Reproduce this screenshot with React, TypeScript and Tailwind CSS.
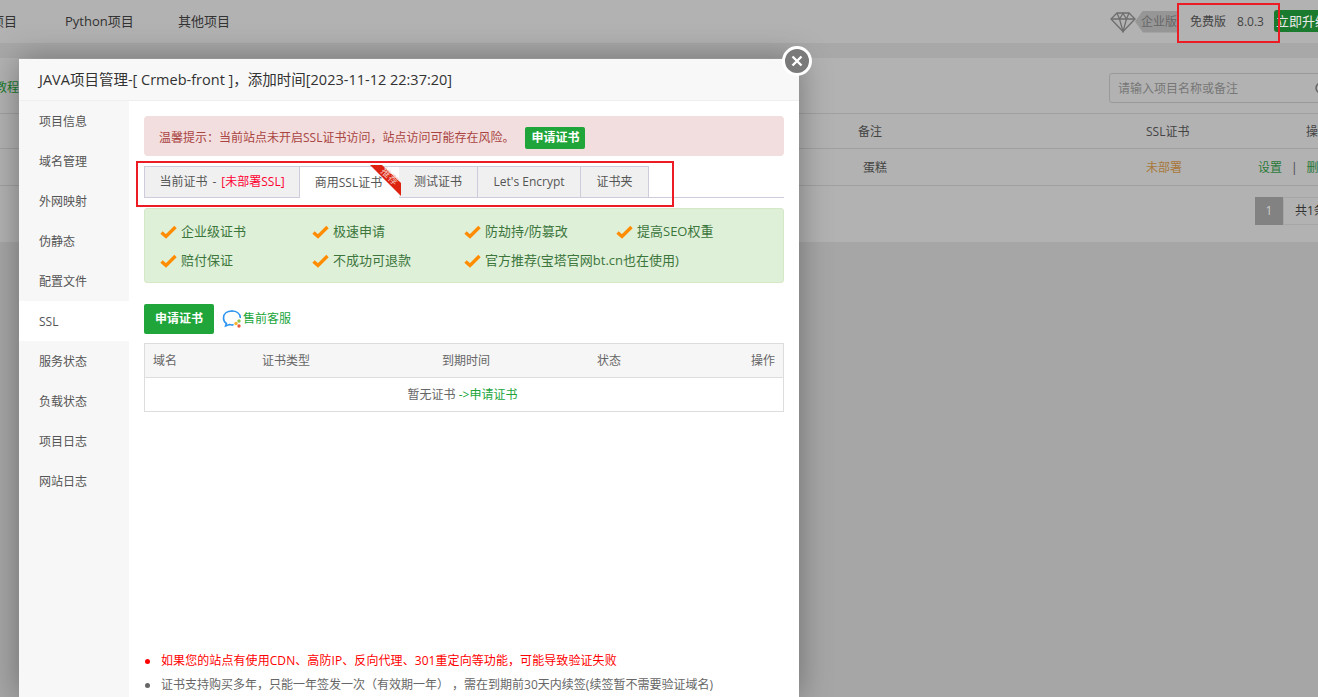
const FONT = "font-['Open_Sans','Noto_Sans_CJK_SC',sans-serif]";

const sideItems = ["项目信息", "域名管理", "外网映射", "伪静态", "配置文件", "SSL", "服务状态", "负载状态", "项目日志", "网站日志"];
const tabs = [
  { label: "测试证书", w: "w-[79px]" },
  { label: "Let's Encrypt", w: "w-[103px]" },
  { label: "证书夹", w: "w-[68px]" },
];
const featureRows = [
  ["企业级证书", "极速申请", "防劫持/防篡改", "提高SEO权重"],
  ["赔付保证", "不成功可退款", "官方推荐(宝塔官网bt.cn也在使用)"],
];

const Check = () => (
  <svg width="17" height="14" viewBox="0 0 17 14" className="mr-[4px] shrink-0">
    <path d="M1.5 7.5 L6 11.5 L15.5 2" fill="none" stroke="#ff8c00" strokeWidth="3.4" />
  </svg>
);

const Diamond = () => (
  <svg width="26" height="22" viewBox="0 0 26 22" fill="none" stroke="#6e6e6e" strokeWidth="1.3" className="shrink-0">
    <path d="M7 2 H19 L25 8 L13 20.5 L1 8 Z" />
    <path d="M1 8 H25 M7 2 L9.5 8 L13 20.5 L16.5 8 L19 2 M9.5 8 L13 2.5 L16.5 8" />
  </svg>
);

const ChatIcon = () => (
  <svg width="21" height="20" viewBox="0 0 21 20" fill="none">
    <path d="M10 2 C5 2 1.5 4.8 1.5 9 C1.5 11.4 2.7 13.3 4.4 14.5 L3.6 17 L7.4 15.6 C8.4 15.9 9.6 16 11 15.9" stroke="#2b93f0" strokeWidth="1.6" strokeLinecap="round" />
    <path d="M10 2 C14.6 2 18 4.6 18.3 8.4" stroke="#2b93f0" strokeWidth="1.6" strokeLinecap="round" />
    <circle cx="17" cy="12" r="1.7" fill="#8bc34a" />
    <circle cx="14" cy="14.5" r="1.7" fill="#f5b32f" />
    <circle cx="17" cy="17" r="1.7" fill="#ef5a3c" />
  </svg>
);

const Backdrop = () => (
  <div className="w-[1318px] h-[697px] bg-[#a6a6a6] overflow-hidden">
    <div className="h-[43px] bg-[#b2b2b2] flex items-center justify-between text-[13px] text-[#333]">
      <div className="flex items-center ml-[-9px]">
        <span className="w-[74px]">项目</span>
        <span className="w-[113px]">Python项目</span>
        <span>其他项目</span>
      </div>
      <div className="flex items-center h-full text-[12px] w-[208px] shrink-0 whitespace-nowrap">
        <Diamond />
        <span className="w-[43px] shrink-0 h-[22px] bg-[#969696] text-[#666] pl-[6px] leading-[22px] ml-[-1px] [clip-path:polygon(8px_0,100%_0,100%_100%,8px_100%,0_50%)]">企业版</span>
        <span className="ml-[12px] shrink-0 text-[#444]">免费版</span>
        <span className="ml-[11px] shrink-0 text-[#444]">8.0.3</span>
        <span className="ml-[10px] mt-[-2px] w-[60px] shrink-0 h-[22px] bg-[#1a7a2e] text-[#e8e8e8] text-[13px] leading-[22px] pl-[2px] rounded-l-[3px]">立即升级</span>
      </div>
    </div>
    <div className="h-[15px] bg-[#a8a8a8]" />
    <div className="h-[184px] bg-[#b2b2b2] text-[12px] text-[#444]">
      <div className="h-[55px] flex items-center justify-between">
        <span className="text-[#1a7a2e] ml-[-5px] mt-[5px]">教程</span>
        <div className="w-[230px] h-[30px] mt-[5px] mr-[-21px] border border-[#999] rounded-[3px] flex items-center justify-between pl-[8px] pr-[8px] pt-[1px] text-[#777]">
          请输入项目名称或备注
          <svg width="16" height="16" viewBox="0 0 16 16" fill="none" stroke="#666" strokeWidth="1.5">
            <circle cx="7" cy="7" r="5" />
            <path d="M11 11 L14.5 14.5" />
          </svg>
        </div>
      </div>
      <div className="grid grid-cols-[858px_288px_160px_1fr] h-[36px] pt-[1px] items-center border-y border-[#a0a0a0] whitespace-nowrap">
        <span />
        <span>备注</span>
        <span>SSL证书</span>
        <span>操作</span>
      </div>
      <div className="grid grid-cols-[863px_283px_112px_1fr] h-[37px] pt-[2px] items-center border-b border-[#a0a0a0]">
        <span />
        <span>蛋糕</span>
        <span className="text-[#a8783a]">未部署</span>
        <span className="text-[#2a7a3a] whitespace-nowrap">设置<span className="mx-[9px] text-[#444]">|</span>删除</span>
      </div>
      <div className="flex justify-start pl-[1255px] mt-[11px]">
        <span className="w-[28px] h-[28px] shrink-0 bg-[#828282] text-[#ccc] flex items-center justify-center">1</span>
        <span className="w-[60px] h-[28px] shrink-0 bg-[#b2b2b2] border border-[#a6a6a6] text-[#333] pl-[11px] leading-[26px] whitespace-nowrap">共1条</span>
      </div>
    </div>
  </div>
);

const Ribbon = () => (
  <div className="absolute left-[70px] top-[-3px] w-[32px] h-[32px]">
    <svg width="32" height="32" viewBox="0 0 32 32" className="absolute inset-0">
      <path d="M0 1 L12 1 L31 19 L31 32 L28 29 Z" fill="#dd2210" />
    </svg>
    <span className="absolute left-[10px] top-[6px] w-[20px] h-[12px] text-[10px] leading-[12px] text-[#f4c7bf] rotate-45 whitespace-nowrap">推荐</span>
  </div>
);

const Modal = () => (
  <div className="absolute left-[19px] top-[59px] w-[780px] h-[638px] bg-white shadow-[0_0_30px_rgba(0,0,0,0.35)] text-[12px] text-[#666]">
    <div className="h-[42px] bg-[#f8f8f8] border-b border-[#eee] flex items-center pl-[20px] text-[14.5px] text-[#333]">
      JAVA项目管理-[ Crmeb-front ]，添加时间[2023-11-12 22:37:20]
    </div>
    <div className="flex h-[596px] overflow-hidden">
      <div className="w-[110px] shrink-0 bg-[#f7f7f7]">
        {sideItems.map((item) => (
          <div key={item} className={`h-[40px] flex items-center pl-[20px] pt-[1px] text-[#555] ${item === "SSL" ? "bg-white" : ""}`}>
            {item}
          </div>
        ))}
      </div>
      <div className="flex-1 px-[15px] pt-[15px] flex flex-col">
        <div className="h-[40px] bg-[#f2dede] rounded-[4px] flex items-center pl-[15px] pt-[4px] text-[#a94442]">
          温馨提示：当前站点未开启SSL证书访问，站点访问可能存在风险。
          <span className="ml-[11px] w-[60px] h-[22px] bg-[#20a53a] text-white rounded-[2px] flex items-center justify-center font-bold">申请证书</span>
        </div>
        <div className="mt-[10px] h-[32px] border-b border-[#ccd] flex">
          <div className="w-[156px] h-[32px] bg-[#f0f0f0] border border-[#ccd] flex items-center justify-center text-[#555]">
            当前证书<span className="mx-[5px]">-</span><span className="text-[#ff0033]">[未部署SSL]</span>
          </div>
          <div className="relative w-[99px] h-[32px] bg-white border-t border-[#ccd] flex items-center justify-center text-[#555]">
            <span className="ml-[-2px]">商用SSL证书</span>
            <Ribbon />
          </div>
          {tabs.map((tab) => (
            <div key={tab.label} className={`${tab.w} h-[32px] bg-[#f0f0f0] border border-l-0 border-[#ccd] flex items-center justify-center text-[#555]`}>
              {tab.label}
            </div>
          ))}
        </div>
        <div className="mt-[10px] h-[75px] bg-[#dff0d8] border border-[#d6e9c6] rounded-[3px] pl-[15px] pt-[8px] text-[13px] text-[#3c763d]">
          {featureRows.map((row) => (
            <div key={row[0]} className="flex h-[29px] items-center">
              {row.map((text) => (
                <div key={text} className="w-[152px] flex items-center whitespace-nowrap">
                  <Check />
                  {text}
                </div>
              ))}
            </div>
          ))}
        </div>
        <div className="mt-[21px] flex items-center">
          <span className="w-[70px] h-[30px] bg-[#20a53a] text-white rounded-[2px] flex items-center justify-center font-bold">申请证书</span>
          <span className="ml-[8px]"><ChatIcon /></span>
          <span className="text-[#20a53a]">售前客服</span>
        </div>
        <div className="mt-[9px] h-[69px] border border-[#ddd]">
          <div className="h-[34px] bg-[#f6f6f6] border-b border-[#ddd] grid grid-cols-[109px_180px_155px_1fr_auto] items-center px-[8px] text-[#666]">
            <span>域名</span>
            <span>证书类型</span>
            <span>到期时间</span>
            <span>状态</span>
            <span>操作</span>
          </div>
          <div className="h-[33px] flex items-center justify-center pt-[1px] pr-[3px] text-[#666]">
            暂无证书&nbsp;<span className="text-[#20a53a]">-&gt;申请证书</span>
          </div>
        </div>
        <ul className="mt-[237px] text-[12px] text-[#666]">
          <li className="h-[24px] flex items-center whitespace-nowrap text-[#ff0000] tracking-[0.08px]">
            <span className="w-[5px] h-[5px] ml-[1px] mr-[11px] rounded-full bg-current shrink-0" />
            如果您的站点有使用CDN、高防IP、反向代理、301重定向等功能，可能导致验证失败
          </li>
          <li className="h-[24px] flex items-center whitespace-nowrap">
            <span className="w-[5px] h-[5px] ml-[1px] mr-[11px] rounded-full bg-current shrink-0" />
            证书支持购买多年，只能一年签发一次（有效期一年）&nbsp;，需在到期前30天内续签(续签暂不需要验证域名)
          </li>
        </ul>
      </div>
    </div>
    <div className="absolute right-[-13px] top-[-13px] w-[30px] h-[30px] rounded-full bg-[#7a7a7a] border-[3px] border-white flex items-center justify-center">
      <svg width="14" height="14" viewBox="0 0 14 14">
        <path d="M2.5 2.5 L11.5 11.5 M11.5 2.5 L2.5 11.5" stroke="#fff" strokeWidth="2.4" />
      </svg>
    </div>
  </div>
);

export default function App() {
  return (
    <div className={`relative w-[1318px] h-[697px] overflow-hidden ${FONT}`}>
      <Backdrop />
      <Modal />
      <div className="absolute left-[136px] top-[161px] w-[538px] h-[46px] border-2 border-[#ed1c24]" />
      <div className="absolute left-[1177px] top-[3px] w-[103px] h-[40px] border-2 border-[#ed1c24]" />
    </div>
  );
}
